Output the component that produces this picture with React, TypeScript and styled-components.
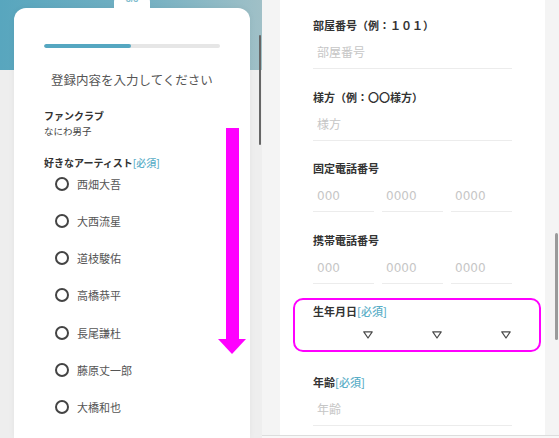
import React from "react";
import styled, { createGlobalStyle, css } from "styled-components";

const GlobalStyle = createGlobalStyle`
  * { box-sizing: border-box; }
  html, body { margin: 0; padding: 0; overflow: hidden; }
  body {
    font-family: "Noto Sans CJK JP", "Noto Sans", sans-serif;
    background: #f3f3f3;
  }
`;

const Screens = styled.div`
  position: relative;
  width: 559px;
  height: 438px;
  display: flex;
  overflow: hidden;
`;

/* ---------- left screen: artist select ---------- */

const LeftScreen = styled.div`
  position: relative;
  width: 262px;
  height: 100%;
  flex-shrink: 0;
  display: flex;
  flex-direction: column;
  padding: 8px 12px 0 14px;
  background:
    linear-gradient(90deg, #58a6be 0%, #74b0c2 55%, #a0c0c7 100%) top / 100% 70px no-repeat,
    #eeeeee;
`;

const StepCard = styled.div`
  position: relative;
  flex: 1;
  background: #ffffff;
  border-radius: 12px 12px 0 0;
  padding: 36px 30px 0;
  box-shadow: 0 0 6px rgba(0, 0, 0, 0.05);
`;

const StepTab = styled.div`
  position: absolute;
  top: -15px;
  left: 50%;
  transform: translateX(-50%);
  width: 36px;
  height: 20px;
  border-radius: 9px 9px 0 0;
  background: #ffffff;
  text-align: center;
  font-family: "Liberation Sans", sans-serif;
  font-size: 9px;
  font-weight: bold;
  line-height: 12px;
  color: #7dbccd;
`;

const Progress = styled.div`
  height: 4px;
  border-radius: 2px;
  background: #e6e6e6;
  overflow: hidden;
`;

const ProgressFill = styled.div`
  height: 100%;
  background: #55a7c1;
  border-radius: 2px;
`;

const Title = styled.div`
  margin-top: 23px;
  text-align: center;
  font-size: 12.5px;
  line-height: 18px;
  color: #555555;
`;

const SmallLabel = styled.div<{ $gap?: number }>`
  margin-top: ${({ $gap }) => $gap ?? 0}px;
  font-size: 10px;
  font-weight: bold;
  line-height: 14.5px;
  color: #333333;
`;

const SmallValue = styled.div`
  font-size: 9.5px;
  line-height: 14.5px;
  color: #444444;
`;

const Required = styled.span`
  color: #5aaec7;
  font-weight: 500;
`;

const RadioList = styled.div`
  margin-top: 3px;
  display: flex;
  flex-direction: column;
  gap: 17.3px;
`;

const RadioRow = styled.label`
  display: flex;
  align-items: center;
  gap: 8px;
  height: 20px;
  padding-left: 11px;
  font-size: 11px;
  color: #555555;
`;

const RadioCircle = styled.span`
  width: 14px;
  height: 14px;
  border-radius: 50%;
  border: 2px solid #444444;
  flex-shrink: 0;
`;

const ScrollThumb = styled.div<{ $top: number; $height: number; $right: number; $width: number; $color: string }>`
  position: absolute;
  top: ${({ $top }) => $top}px;
  right: ${({ $right }) => $right}px;
  width: ${({ $width }) => $width}px;
  height: ${({ $height }) => $height}px;
  border-radius: 2px;
  background: ${({ $color }) => $color};
`;

/* ---------- right screen: address / contact form ---------- */

const RightScreen = styled.div`
  position: relative;
  flex: 1;
  min-width: 0;
  display: flex;
  flex-direction: column;
  background: #f4f4f4;
`;

const FormCard = styled.div`
  flex: 1;
  margin: 0 14px 0 18px;
  background: #ffffff;
  padding: 18px 33px 0;
  overflow: hidden;
`;

const BottomBar = styled.div`
  height: 3px;
  border-top: 1px solid #dddddd;
  background: #f8f8f8;
`;

const Field = styled.div<{ $highlight?: boolean }>`
  position: relative;
  margin-bottom: 20.5px;
  ${({ $highlight }) =>
    $highlight &&
    css`
      &::before {
        content: "";
        position: absolute;
        top: -6px;
        bottom: 2px;
        left: -20px;
        right: -29px;
        border: 2.5px solid #ff00ff;
        border-radius: 10px;
        pointer-events: none;
      }
    `}
`;

const FieldLabel = styled.div`
  font-size: 11px;
  font-weight: bold;
  line-height: 14px;
  color: #333333;
`;

const InputRow = styled.div`
  display: flex;
  gap: 8px;
  margin-top: 6px;
`;

const TextInput = styled.input`
  flex: 1 1 0;
  width: 0;
  min-width: 0;
  height: 31px;
  border: none;
  border-bottom: 1px solid #ececec;
  padding: 4px 4px 4px;
  background: transparent;
  font-family: "DejaVu Sans", "Noto Sans CJK JP", sans-serif;
  font-size: 12px;
  color: #333333;
  outline: none;

  &::placeholder {
    color: #c6c6c6;
  }
`;

const SelectBox = styled.div`
  flex: 1 1 0;
  height: 30px;
  display: flex;
  justify-content: flex-end;
  align-items: flex-start;
  padding: 7px 1px 0 0;
`;

const ArrowOverlay = styled.svg`
  position: absolute;
  left: 218px;
  top: 128px;
`;

const artists = ["西畑大吾", "大西流星", "道枝駿佑", "高橋恭平", "長尾謙杜", "藤原丈一郎", "大橋和也"];

const DownTriangle: React.FC = () => (
  <svg width="10" height="8" viewBox="0 0 10 8">
    <path d="M0.8 0.8 H9.2 L5 7 Z" fill="none" stroke="#4a4a4a" strokeWidth="1.2" strokeLinejoin="round" />
  </svg>
);

const App: React.FC = () => {
  return (
    <>
      <GlobalStyle />
      <Screens>
        <LeftScreen>
          <StepCard>
            <StepTab>3/3</StepTab>
            <Progress>
              <ProgressFill style={{ width: "49.5%" }} />
            </Progress>
            <Title>登録内容を入力してください</Title>
            <SmallLabel $gap={20}>ファンクラブ</SmallLabel>
            <SmallValue>なにわ男子</SmallValue>
            <SmallLabel $gap={18}>
              好きなアーティスト<Required>[必須]</Required>
            </SmallLabel>
            <RadioList>
              {artists.map((name) => (
                <RadioRow key={name}>
                  <RadioCircle />
                  {name}
                </RadioRow>
              ))}
            </RadioList>
          </StepCard>
          <ScrollThumb $top={35} $height={110} $right={1} $width={2} $color="#666666" />
        </LeftScreen>

        <RightScreen>
          <FormCard>
            <Field>
              <FieldLabel>部屋番号（例：１０１）</FieldLabel>
              <InputRow>
                <TextInput placeholder="部屋番号" />
              </InputRow>
            </Field>
            <Field>
              <FieldLabel>様方（例：〇〇様方）</FieldLabel>
              <InputRow>
                <TextInput placeholder="様方" />
              </InputRow>
            </Field>
            <Field>
              <FieldLabel>固定電話番号</FieldLabel>
              <InputRow>
                <TextInput placeholder="000" />
                <TextInput placeholder="0000" />
                <TextInput placeholder="0000" />
              </InputRow>
            </Field>
            <Field>
              <FieldLabel>携帯電話番号</FieldLabel>
              <InputRow>
                <TextInput placeholder="000" />
                <TextInput placeholder="0000" />
                <TextInput placeholder="0000" />
              </InputRow>
            </Field>
            <Field $highlight>
              <FieldLabel>
                生年月日<Required>[必須]</Required>
              </FieldLabel>
              <InputRow>
                <SelectBox>
                  <DownTriangle />
                </SelectBox>
                <SelectBox>
                  <DownTriangle />
                </SelectBox>
                <SelectBox>
                  <DownTriangle />
                </SelectBox>
              </InputRow>
            </Field>
            <Field>
              <FieldLabel>
                年齢<Required>[必須]</Required>
              </FieldLabel>
              <InputRow>
                <TextInput placeholder="年齢" />
              </InputRow>
            </Field>
          </FormCard>
          <BottomBar />
          <ScrollThumb $top={233} $height={107} $right={1} $width={3} $color="#9a9a9a" />
        </RightScreen>

        {/* scroll hint arrow */}
        <ArrowOverlay width="28" height="226" viewBox="0 0 28 226">
          <rect x="8" y="0" width="13" height="211" fill="#ff00ff" />
          <polygon points="0,211 28,211 14,226" fill="#ff00ff" />
        </ArrowOverlay>
      </Screens>
    </>
  );
};

export default App;
